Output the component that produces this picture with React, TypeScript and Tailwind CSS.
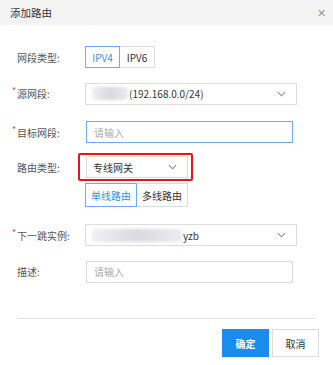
import type { ReactNode } from "react";

// 添加路由 dialog — static recreation.

const FONT = { fontFamily: '"Noto Sans CJK SC", "Liberation Sans", sans-serif' };

function Chevron() {
  return (
    <svg viewBox="0 0 10 6" width="9" height="6" fill="none" stroke="#8a8a8a" strokeWidth="1.2" aria-hidden="true">
      <polyline points="1 1 5 5 9 1" />
    </svg>
  );
}

// label column is 85px wide so every control starts at the same x
function Label({ required, children }: { required?: boolean; children: ReactNode }) {
  return (
    <div className="relative w-[85px] shrink-0 whitespace-nowrap pl-[17px] text-[10px] text-[#555]">
      {required && <span className="absolute left-[12px] top-[-2px] text-[9px] text-[#e5484d]">*</span>}
      {children}
    </div>
  );
}

// blurred placeholder for masked values
function Blur({ w }: { w: number }) {
  return (
    <span
      className="mr-[1px] inline-block h-[13px] rounded-[4px] bg-gradient-to-r from-[#f0f0f2] via-[#d9d9de] to-[#ececef] blur-[1.5px]"
      style={{ width: w }}
    />
  );
}

function Select({ children, w = 212 }: { children: ReactNode; w?: number }) {
  return (
    <div
      className="flex h-[22px] items-center justify-between border border-[#dcdcdc] bg-white pl-[6px] pr-[10px] text-[10px] text-[#333]"
      style={{ width: w }}
    >
      <div className="flex items-center">{children}</div>
      <Chevron />
    </div>
  );
}

function Input({ focused }: { focused?: boolean }) {
  return (
    <div
      className={`ml-[1px] flex h-[22px] w-[207px] items-center border bg-white pl-[7px] text-[10px] text-[#aaa] ${
        focused ? "border-[#69aef0]" : "border-[#dcdcdc]"
      }`}
    >
      请输入
    </div>
  );
}

export default function App() {
  return (
    <div className="h-[365px] w-[333px] bg-white" style={FONT}>
      {/* header */}
      <div className="flex h-[25px] items-center justify-between bg-[#f3f3f3] pl-[10px] pr-[7px]">
        <span className="text-[10.5px] text-[#333]">添加路由</span>
        <span className="text-[11px] text-[#999]">✕</span>
      </div>

      {/* IP type */}
      <div className="mt-[21px] flex h-[22px] items-center">
        <Label>网段类型:</Label>
        <div className="flex">
          <div className="flex h-[22px] w-[35px] items-center justify-center border border-[#69aef0] text-[10px] text-[#3a8ee6]">
            IPV4
          </div>
          <div className="flex h-[22px] w-[35px] items-center justify-center border border-l-0 border-[#dcdcdc] text-[10px] text-[#333]">
            IPV6
          </div>
        </div>
      </div>

      {/* source */}
      <div className="mt-[15px] flex h-[21px] items-center">
        <Label required>源网段:</Label>
        <Select>
          <Blur w={36} />
          <span>(192.168.0.0/24)</span>
        </Select>
      </div>

      {/* target */}
      <div className="mt-[17px] flex h-[22px] items-center">
        <Label required>目标网段:</Label>
        <Input focused />
      </div>

      {/* route type, red annotation frame */}
      <div className="mt-[10px] flex items-center">
        <Label>路由类型:</Label>
        <div className="ml-[-7px] rounded-[2px] border-2 border-[#e8141a] pb-[1px] pl-[6px] pr-[3px] pt-[1px]">
          <Select w={102}>
            <span>专线网关</span>
          </Select>
        </div>
      </div>

      <div className="mt-[2px] flex pl-[85px]">
        <div className="flex h-[24px] w-[52px] items-center justify-center border border-[#69aef0] text-[10px] text-[#3a8ee6]">
          单线路由
        </div>
        <div className="flex h-[24px] w-[51px] items-center justify-center border border-l-0 border-[#dcdcdc] text-[10px] text-[#333]">
          多线路由
        </div>
      </div>

      {/* next hop */}
      <div className="mt-[17px] flex h-[22px] items-center">
        <Label required>下一跳实例:</Label>
        <Select>
          <Blur w={90} />
          <span>yzb</span>
        </Select>
      </div>

      {/* description */}
      <div className="mt-[15px] flex h-[21px] items-center">
        <Label>描述:</Label>
        <Input />
      </div>

      <div className="mx-[17px] mt-[36px] h-[1px] bg-[#e2e2e2]" />

      <div className="mt-[10px] flex justify-end gap-[3px] pr-[14px]">
        <button
          type="button"
          className="h-[28px] w-[47px] bg-[#1a8cec] text-[10px] font-bold text-white"
        >
          确定
        </button>
        <button
          type="button"
          className="h-[28px] w-[47px] border border-[#dcdcdc] bg-white text-[10px] text-[#333]"
        >
          取消
        </button>
      </div>
    </div>
  );
}
